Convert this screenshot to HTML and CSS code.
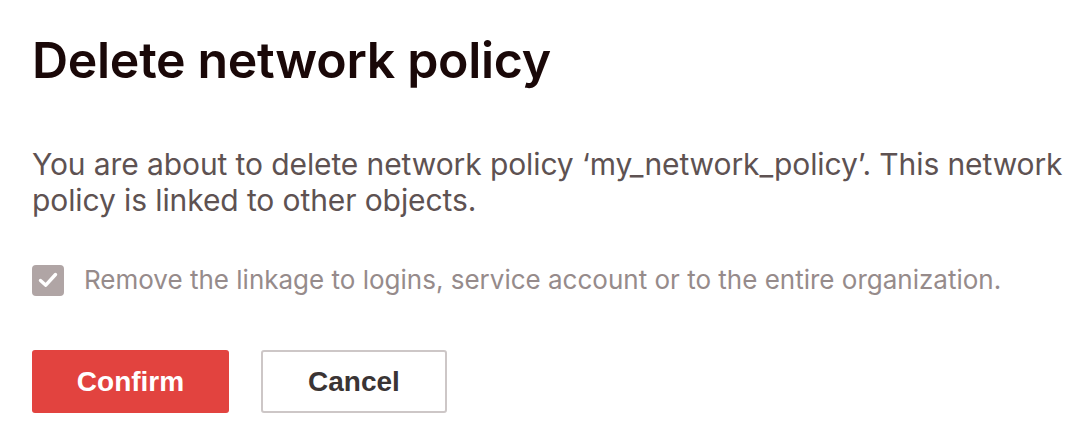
FILE: index.html
```html
<!DOCTYPE html>
<html>
<head>
<meta charset="utf-8">
<link rel="stylesheet" href="styles.css">
</head>
<body>
<div class="dialog">
  <h1 class="title">Delete network policy</h1>
  <p class="message">You are about to delete network policy ‘my_network_policy’. This network policy is linked to other objects.</p>
  <label class="check-row">
    <span class="checkbox">
      <svg width="24" height="24" viewBox="0 0 24 24"><path d="M4.5 12.5 L9.8 17.2 L19.5 6.5" fill="none" stroke="#fff" stroke-width="3.4" stroke-linecap="round" stroke-linejoin="round"/></svg>
    </span>
    <span class="check-label">Remove the linkage to logins, service account or to the entire organization.</span>
  </label>
  <div class="actions">
    <button class="btn btn-primary">Confirm</button>
    <button class="btn btn-secondary">Cancel</button>
  </div>
</div>
</body>
</html>
```
FILE: styles.css
```css
html, body {
  margin: 0;
  padding: 0;
  background: #ffffff;
}
.dialog {
  padding: 28px 8px 0 32px;
  font-family: "Inter", "Liberation Sans", sans-serif;
}
.title {
  margin: 0;
  font-family: "Inter", sans-serif;
  font-weight: 600;
  font-size: 50px;
  line-height: 64px;
  letter-spacing: -0.3px;
  color: #1a0808;
}
.message {
  margin: 54px 0 0 0;
  font-size: 30px;
  line-height: 36px;
  letter-spacing: -0.1px;
  color: #5e5252;
}
.check-row {
  display: flex;
  align-items: center;
  gap: 20px;
  margin-top: 46px;
}
.checkbox {
  flex: none;
  width: 32px;
  height: 31px;
  border-radius: 4px;
  background: #b0a5a5;
  display: flex;
  align-items: center;
  justify-content: center;
}
.check-label {
  font-size: 26px;
  line-height: 32px;
  color: #968b8b;
}
.actions {
  display: flex;
  gap: 32px;
  margin-top: 54px;
}
.btn {
  height: 63px;
  border-radius: 3px;
  font-family: "Liberation Sans", Arial, sans-serif;
  font-weight: 700;
  font-size: 28px;
  cursor: pointer;
}
.btn-primary {
  width: 197px;
  background: #e2433f;
  border: none;
  color: #ffffff;
}
.btn-secondary {
  width: 186px;
  background: #ffffff;
  border: 2px solid #cdc7c7;
  color: #3a3434;
}
```
